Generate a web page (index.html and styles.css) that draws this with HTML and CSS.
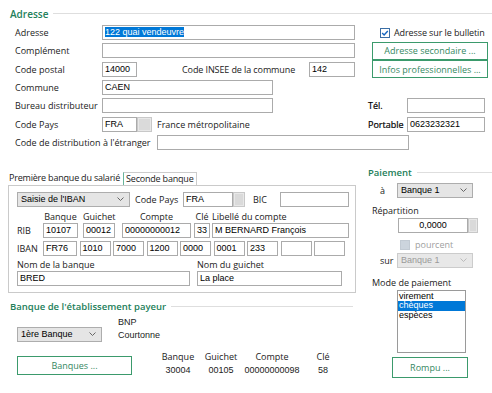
FILE: index.html
```html
<!DOCTYPE html>
<html lang="fr">
<head>
	<meta charset="UTF-8">
	<title>Fiche salarié</title>
	<link rel="stylesheet" href="styles.css">
</head>
<body>
<div class="fiche">
	<!-- Adresse -->
	<div class="adresse">
		<div class="legend">Adresse</div>
		<div class="rows">
			<div class="row">
				<span class="lbl">Adresse</span>
				<div class="field w-adr"><span class="sel">122 quai vendeuvre</span></div>
				<span class="check on">
					<svg width="10" height="10" viewBox="0 0 10 10"><rect x=".5" y=".5" width="9" height="9" fill="#fff" stroke="#3b6ea5"/><path d="M2.2 5l1.9 1.9 3.7-4" fill="none" stroke="#1565c0" stroke-width="1.4"/></svg>
				</span>
				<span class="check-txt">Adresse sur le bulletin</span>
			</div>
			<div class="row">
				<span class="lbl">Complément</span>
				<div class="field w-adr"></div>
				<div class="btn btn-side">Adresse secondaire ...</div>
			</div>
			<div class="row">
				<span class="lbl">Code postal</span>
				<div class="field w-cp">14000</div>
				<span class="lbl-insee">Code INSEE de la commune</span>
				<div class="field w-insee">142</div>
				<div class="btn btn-side">Infos professionnelles ...</div>
			</div>
			<div class="row">
				<span class="lbl">Commune</span>
				<div class="field w-commune">CAEN</div>
			</div>
			<div class="row">
				<span class="lbl">Bureau distributeur</span>
				<div class="field w-commune"></div>
				<span class="lbl-tel first">Tél.</span>
				<div class="field w-tel"></div>
			</div>
			<div class="row">
				<span class="lbl">Code Pays</span>
				<div class="field w-cp">FRA</div>
				<div class="lookup"></div>
				<span class="pays-nom">France métropolitaine</span>
				<span class="lbl-tel">Portable</span>
				<div class="field w-tel">0623232321</div>
			</div>
			<div class="row">
				<span class="lbl lbl-etranger">Code de distribution à l'étranger</span>
				<div class="field w-etranger"></div>
			</div>
		</div>
	</div>

	<div class="middle">
		<div class="left">
			<!-- onglets banque du salarié -->
			<div class="tabs">
				<span class="tab active">Première banque du salarié</span>
				<span class="tab">Seconde banque</span>
			</div>
			<div class="panel">
				<div class="prow">
					<div class="dd dd-iban">Saisie de l'IBAN
						<svg width="7" height="4" viewBox="0 0 7 4"><path d="M.5.5l3 3 3-3" fill="none" stroke="#666"/></svg>
					</div>
					<span class="lbl-pays">Code Pays</span>
					<div class="field w-fra">FRA</div>
					<div class="lookup small"></div>
					<span class="lbl-bic">BIC</span>
					<div class="field w-bic"></div>
				</div>
				<div class="heads">
					<span class="side"></span>
					<span class="c-bq">Banque</span>
					<span class="c-gu">Guichet</span>
					<span class="c-cpt">Compte</span>
					<span class="c-cle">Clé</span>
					<span class="c-lib">Libellé du compte</span>
				</div>
				<div class="prow">
					<span class="side">RIB</span>
					<div class="field c-bq">10107</div>
					<div class="field c-gu">00012</div>
					<div class="field c-cpt">00000000012</div>
					<div class="field c-cle">33</div>
					<div class="field c-lib">M BERNARD François</div>
				</div>
				<div class="prow iban">
					<span class="side">IBAN</span>
					<div class="field c-fr">FR76</div>
					<div class="field c-ib">1010</div>
					<div class="field c-ib">7000</div>
					<div class="field c-ib">1200</div>
					<div class="field c-ib">0000</div>
					<div class="field c-ib">0001</div>
					<div class="field c-ib">233</div>
					<div class="field c-ib"></div>
					<div class="field c-ib"></div>
				</div>
				<div class="names">
					<span class="lbl-nombq">Nom de la banque</span>
					<span>Nom du guichet</span>
				</div>
				<div class="prow">
					<div class="field w-bred">BRED</div>
					<div class="field w-place">La place</div>
				</div>
			</div>

			<!-- Banque de l'établissement payeur -->
			<div class="payeur">
				<div class="legend">Banque de l'établissement payeur</div>
				<div class="bnp-row">
					<div class="dd dd-1ere">1ère Banque
						<svg width="7" height="4" viewBox="0 0 7 4"><path d="M.5.5l3 3 3-3" fill="none" stroke="#666"/></svg>
					</div>
					<div class="bnp">BNP<br>Courtonne</div>
				</div>
				<div class="totals">
					<div class="btn btn-banques">Banques ...</div>
					<div class="col col-bq">Banque<br><span class="num">30004</span></div>
					<div class="col col-gu">Guichet<br><span class="num">00105</span></div>
					<div class="col col-cpt">Compte<br><span class="num">00000000098</span></div>
					<div class="col col-cle">Clé<br><span class="num">58</span></div>
				</div>
			</div>
		</div>

		<!-- Paiement -->
		<div class="paiement">
			<div class="legend">Paiement</div>
			<div class="p-row first">
				<span class="p-lbl">à</span>
				<div class="dd dd-banque">Banque 1
					<svg width="7" height="4" viewBox="0 0 7 4"><path d="M.5.5l3 3 3-3" fill="none" stroke="#666"/></svg>
				</div>
			</div>
			<div class="p-title">Répartition</div>
			<div class="p-input">
				<div class="field w-rep">0,0000</div>
				<div class="lookup tiny"></div>
			</div>
			<div class="p-chk">
				<span class="check off"></span>
				<span>pourcent</span>
			</div>
			<div class="p-row sur">
				<span class="p-lbl">sur</span>
				<div class="dd dd-banque disabled">Banque 1
					<svg width="7" height="4" viewBox="0 0 7 4"><path d="M.5.5l3 3 3-3" fill="none" stroke="#bbb"/></svg>
				</div>
			</div>
			<div class="p-title mode">Mode de paiement</div>
			<div class="listbox">
				<div class="item">virement</div>
				<div class="item selected">chèques</div>
				<div class="item">espèces</div>
			</div>
			<div class="btn btn-rompu">Rompu ...</div>
		</div>
	</div>
</div>
</body>
</html>
```

FILE: styles.css
```css
* {
	box-sizing: border-box;
}

body {
	margin: 0;
	background-color: #FFF;
	font-family: "Open Sans", "Noto Sans", sans-serif;
	font-size: 9px;
	color: #222;
}

.fiche {
	width: 492px;
	height: 393px;
	overflow: hidden;
}

/* titres de groupe */
.legend {
	display: flex;
	align-items: center;
	gap: 5px;
	height: 15px;
	color: #23805a;
	font-size: 9.5px;
	font-weight: 600;
	white-space: nowrap;
}

.legend::after {
	content: "";
	flex: 1;
	height: 1px;
	background-color: #DEDEDE;
}

/* champs */
.field {
	flex: none;
	height: 15px;
	border: 1px solid #ABABAB;
	background-color: #FFF;
	padding: 0 2px;
	font-family: "Liberation Sans", Arial, sans-serif;
	font-size: 9px;
	line-height: 13px;
	color: #000;
	white-space: nowrap;
	overflow: hidden;
}

.sel {
	background-color: #0078D7;
	color: #FFF;
}

.lookup {
	flex: none;
	width: 15px;
	height: 15px;
	border: 1px solid #C8C8C8;
	background-color: #DADADA;
	box-shadow: inset 0 0 0 1px #E8E8E8;
}

.lookup.small {
	width: 12px;
}

.lookup.tiny {
	width: 10px;
}

.dd {
	flex: none;
	display: flex;
	align-items: center;
	justify-content: space-between;
	height: 15px;
	padding: 0 5px 0 3px;
	border: 1px solid #ADADAD;
	background-color: #E5E5E5;
	font-family: "Liberation Sans", Arial, sans-serif;
	font-size: 9px;
	color: #000;
}

.dd.disabled {
	border-color: #CCC;
	background-color: #E8E8E8;
	color: #9A9A9A;
}

.btn {
	flex: none;
	display: flex;
	align-items: center;
	justify-content: center;
	border: 1px solid #3B9A6C;
	background-color: #FFF;
	color: #35885F;
}

.check {
	flex: none;
	display: block;
	width: 10px;
	height: 10px;
}

.check svg {
	display: block;
}

.check.off {
	border: 1px solid #C2CAD3;
	background-color: #CCD4DD;
}

/* Adresse */
.adresse {
	padding: 6px 0 0 10px;
}

.adresse .legend {
	font-size: 10px;
}

.rows {
	margin-top: 2.5px;
	padding-left: 5px;
}

.row {
	display: flex;
	align-items: center;
	height: 18.3px;
}

.lbl {
	flex: none;
	width: 87px;
}

.lbl.lbl-etranger {
	width: 142px;
}

.w-adr {
	width: 253px;
}

.w-cp {
	width: 35px;
}

.w-insee {
	width: 46px;
}

.w-commune {
	width: 171px;
}

.w-tel {
	width: 78px;
}

.w-etranger {
	width: 252px;
}

.lbl-insee {
	flex: none;
	width: 127px;
	margin-left: 45px;
	letter-spacing: -0.1px;
}

.check.on {
	margin-left: 25px;
}

.check-txt {
	margin-left: 4px;
	letter-spacing: -0.1px;
}

.btn-side {
	width: 116px;
	height: 18px;
	margin-left: 17px;
}

.lbl-tel {
	flex: none;
	width: 39px;
	color: #000;
	-webkit-text-stroke: 0.2px #000;
}

.lbl-tel.first {
	margin-left: 95px;
}

.pays-nom {
	flex: none;
	width: 211px;
	margin-left: 5px;
}

/* zone centrale */
.middle {
	display: flex;
	margin-top: 14.4px;
}

.left {
	flex: none;
	width: 360px;
	padding-left: 7px;
}

.tabs {
	display: flex;
	height: 13px;
	margin-top: 6px;
	line-height: 12px;
	letter-spacing: -0.2px;
}

.tab {
	padding: 0 2px;
	white-space: nowrap;
}

.tab + .tab {
	margin-left: 1px;
	border: 1px solid #CCC;
	border-left-color: #67B59B;
	border-bottom: none;
}

.panel {
	width: 348px;
	height: 108px;
	margin-left: 1px;
	padding: 6px 0 0 8px;
	border: 1px solid #CACACA;
}

.prow {
	display: flex;
	align-items: center;
	height: 15px;
}

.prow.iban {
	margin-top: 3px;
}

.dd-iban {
	width: 113px;
}

.lbl-pays {
	flex: none;
	width: 48px;
	margin-left: 5px;
}

.w-fra {
	width: 50px;
}

.lbl-bic {
	flex: none;
	width: 27px;
	margin-left: 8px;
}

.w-bic {
	width: 69px;
}

.heads {
	display: flex;
	height: 16px;
	padding-top: 3px;
	line-height: 13px;
}

.heads span {
	flex: none;
	text-align: center;
}

.heads .c-lib {
	text-align: left;
}

.side {
	flex: none;
	width: 26px;
}

.c-bq {
	width: 35px;
}

.c-gu {
	width: 32px;
	margin-left: 5px;
}

.c-cpt {
	width: 69px;
	margin-left: 7px;
}

.c-cle {
	width: 16px;
	margin-left: 3px;
}

.c-lib {
	width: 137px;
	margin-left: 2px;
}

.c-fr {
	width: 34px;
}

.c-ib {
	width: 31px;
	margin-left: 2.5px;
}

.names {
	display: flex;
	height: 15px;
	padding-top: 2px;
	line-height: 13px;
}

.lbl-nombq {
	width: 180px;
}

.w-bred {
	width: 173px;
}

.w-place {
	width: 145px;
	margin-left: 7px;
}

/* Banque de l'établissement payeur */
.payeur {
	width: 346px;
	margin-top: 7px;
	padding-left: 3px;
}

.payeur .legend {
	height: 14px;
}

.bnp-row {
	display: flex;
	height: 28px;
	margin-top: 1px;
	padding-left: 7px;
}

.dd-1ere {
	width: 85px;
	align-self: flex-end;
	margin-bottom: 1px;
}

.bnp {
	margin-left: 16px;
	padding-top: 1px;
	font-family: "Liberation Sans", Arial, sans-serif;
	line-height: 13px;
}

.totals {
	display: flex;
	margin-top: 7px;
	padding-left: 7px;
}

.btn-banques {
	width: 115px;
	height: 19px;
	margin-top: 6px;
}

.col {
	flex: none;
	text-align: center;
	line-height: 13px;
}

.num {
	font-family: "Liberation Sans", Arial, sans-serif;
}

.col-bq {
	width: 36px;
	margin-left: 28px;
}

.col-gu {
	width: 36px;
	margin-left: 7px;
}

.col-cpt {
	width: 64px;
	margin-left: 1px;
}

.col-cle {
	width: 20px;
	margin-left: 9px;
}

/* Paiement */
.paiement {
	flex: 1;
	padding-left: 8px;
}

.paiement .legend {
	height: 13px;
}

.p-row {
	display: flex;
	align-items: center;
	height: 15px;
	padding-left: 12px;
}

.p-row.first {
	margin-top: 4px;
}

.p-row.sur {
	margin-top: 3px;
}

.p-lbl {
	flex: none;
	width: 17px;
}

.dd-banque {
	width: 76px;
}

.p-title {
	height: 14px;
	margin-top: 6px;
	padding-left: 4px;
	line-height: 14px;
}

.p-title.mode {
	margin-top: 8px;
}

.p-input {
	display: flex;
	height: 15px;
	padding-left: 30px;
}

.w-rep {
	width: 70px;
	text-align: center;
}

.p-chk {
	display: flex;
	align-items: center;
	height: 10px;
	margin-top: 7px;
	padding-left: 32px;
	line-height: 10px;
	color: #A0A0A0;
}

.p-chk span + span {
	margin-left: 5px;
}

.listbox {
	width: 69px;
	height: 63px;
	margin-left: 29px;
	padding-top: 1px;
	border: 1px solid #9A9A9A;
	font-family: "Liberation Sans", Arial, sans-serif;
	font-size: 9px;
	color: #000;
}

.item {
	height: 9.5px;
	padding-left: 1px;
	line-height: 9.5px;
}

.item.selected {
	background-color: #0078D7;
	color: #FFF;
}

.btn-rompu {
	width: 76px;
	height: 21px;
	margin-top: 4px;
	margin-left: 24px;
}
```
